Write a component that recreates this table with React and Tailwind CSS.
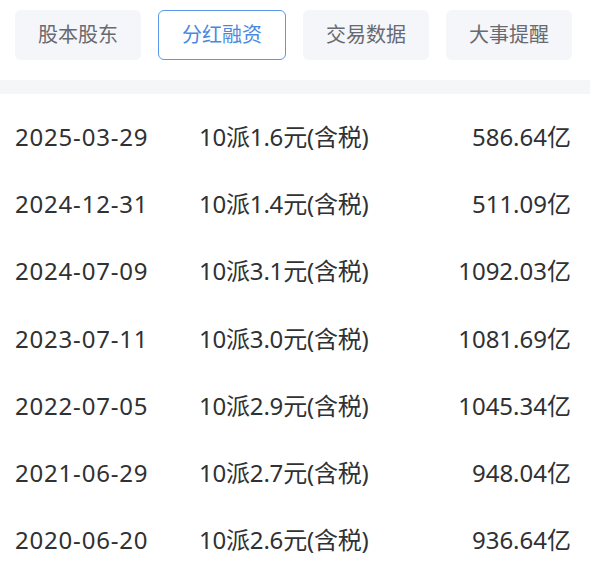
import React from 'react';

const tabs = ['股本股东', '分红融资', '交易数据', '大事提醒'];

const rows = [
  ['2025-03-29', '10派1.6元(含税)', '586.64亿'],
  ['2024-12-31', '10派1.4元(含税)', '511.09亿'],
  ['2024-07-09', '10派3.1元(含税)', '1092.03亿'],
  ['2023-07-11', '10派3.0元(含税)', '1081.69亿'],
  ['2022-07-05', '10派2.9元(含税)', '1045.34亿'],
  ['2021-06-29', '10派2.7元(含税)', '948.04亿'],
  ['2020-06-20', '10派2.6元(含税)', '936.64亿'],
];

export default function App() {
  return (
    <div
      className="w-[590px] h-[577px] bg-white overflow-hidden"
      style={{ fontFamily: '"Noto Sans", "Noto Sans CJK SC", sans-serif' }}
    >
      {/* tabs */}
      <div className="flex gap-[17px] pl-[15px] pr-[18px] pt-[10px]">
        {tabs.map((t, i) => (
          <div
            key={t}
            className={`flex-1 h-[50px] rounded-[6px] flex items-center justify-center text-[20px] ${
              i === 1
                ? 'border border-[#5b97ea] text-[#4a88e0] bg-white'
                : 'bg-[#f5f6fa] text-[#676a70]'
            }`}
          >
            {t}
          </div>
        ))}
      </div>

      <div className="mt-[20px] h-[14px] bg-[#f5f6f8]" />

      {/* dividend list */}
      <div className="pt-[9px]">
        {rows.map(r => (
          <div key={r[0]} className="h-[67.3px] flex items-center px-[15px] text-[24px] text-[#303133]">
            <span className="w-[184px] tracking-[0.8px]">{r[0]}</span>
            <span className="tracking-[-0.2px]">{r[1]}</span>
            <span className="ml-auto pr-[4px]">{r[2]}</span>
          </div>
        ))}
      </div>
    </div>
  );
}
